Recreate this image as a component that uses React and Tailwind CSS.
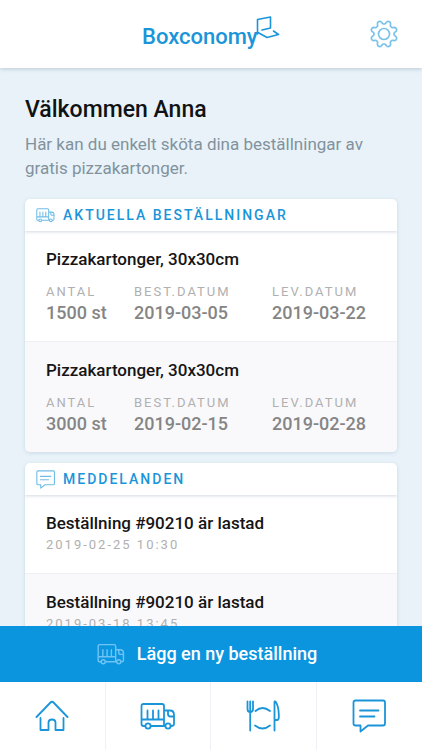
import React from "react";

function Logo() {
  return (
    <svg viewBox="0 0 140 36" className="h-9 w-[140px]" fill="none" role="img" aria-label="Boxconomy">
      <text x="1" y="28" fill="#1b95d9" fontSize="22" fontWeight="500" className="font-['Roboto',sans-serif]">
        Boxconomy
      </text>
      <path
        d="M116.500 18V3.500L129.500 1V12L121 14M117 16.500L126 21.500L137.500 18.500L132.500 15"
        stroke="#1b95d9"
        strokeWidth="1.600"
        strokeLinecap="round"
        strokeLinejoin="round"
      />
    </svg>
  );
}

// Eight rounded teeth traced as a wave around the hub.
const gearPath =
  Array.from({ length: 144 }, (_, i) => {
    const angle = (i / 144) * Math.PI * 2;
    const wave = Math.tanh(-1.5 * Math.cos(8 * angle)) / Math.tanh(1.5);
    const r = 11.7 + 1.7 * wave;
    return `${i ? "L" : "M"}${(14 + r * Math.cos(angle)).toFixed(2)} ${(14 + r * Math.sin(angle)).toFixed(2)}`;
  }).join("") + "Z";

function GearIcon({ className }) {
  return (
    <svg viewBox="0 0 28 28" className={className} fill="none" stroke="currentColor" strokeWidth="1.700" strokeLinejoin="round" aria-hidden="true">
      <circle cx="14" cy="14" r="5.500" />
      <path d={gearPath} />
    </svg>
  );
}

function TruckIcon({ className, strokeWidth = 1.8 }) {
  return (
    <svg viewBox="0 0 36 28" className={className} fill="none" stroke="currentColor" strokeWidth={strokeWidth} strokeLinecap="round" strokeLinejoin="round" aria-hidden="true">
      <path d="M5 24H3.500Q1.500 24 1.500 22V4Q1.500 2 3.500 2H22Q24 2 24 4V24M1.500 17.500H24M11 24H25M24 8.500H30Q34 8.500 34 13V22Q34 24 31 24" />
      <path d="M7.500 8.500V17M13 8.500V17M18.500 8.500V17M28 9V12Q28 14.500 30.500 14.500H34" />
      <circle cx="8" cy="24" r="2.600" />
      <circle cx="28" cy="24" r="2.600" />
    </svg>
  );
}

function MessageIcon({ className, strokeWidth = 1.8 }) {
  return (
    <svg viewBox="0 0 34 34" className={className} fill="none" stroke="currentColor" strokeWidth={strokeWidth} strokeLinecap="round" strokeLinejoin="round" aria-hidden="true">
      <path d="M3.500 1.500H31Q33 1.500 33 3.500V24.500Q33 26.500 31 26.500H16L8.500 32.500V26.500H3.500Q1.500 26.500 1.500 24.500V3.500Q1.500 1.500 3.500 1.500Z" />
      <path d="M8 11.500H26.500M8 17.500H22.500" />
    </svg>
  );
}

function HomeIcon({ className }) {
  return (
    <svg viewBox="0 0 34 32" className={className} fill="none" stroke="currentColor" strokeWidth="1.800" strokeLinecap="round" strokeLinejoin="round" aria-hidden="true">
      <path d="M1.500 17L15.500 2.500Q17 1 18.500 2.500L32.500 17" />
      <path d="M5.500 18V30H13.500V22.500Q13.500 19.500 17 19.500Q20.500 19.500 20.500 22.500V30H28.500V18" />
    </svg>
  );
}

function MealIcon({ className }) {
  return (
    <svg viewBox="0 0 34 32" className={className} fill="none" stroke="currentColor" strokeWidth="1.800" strokeLinecap="round" strokeLinejoin="round" aria-hidden="true">
      <path d="M1.500 1.500V9Q1.500 12 4.200 12Q7 12 7 9V1.500M4.200 1.500V30.500" />
      <path d="M9.500 11Q16.500 5 24 11M9 25.500Q16.500 31.500 24 25.500" />
      <path d="M28.500 30.500V2Q28.500 1 29.500 1.500C32.500 6 33 12 32.800 17.500Q32.700 20 31 20H28.500" />
    </svg>
  );
}

const orders = [
  { name: "Pizzakartonger, 30x30cm", amount: "1500 st", ordered: "2019-03-05", delivery: "2019-03-22" },
  { name: "Pizzakartonger, 30x30cm", amount: "3000 st", ordered: "2019-02-15", delivery: "2019-02-28" },
];

const messages = [
  { title: "Beställning #90210 är lastad", date: "2019-02-25 10:30" },
  { title: "Beställning #90210 är lastad", date: "2019-03-18 13:45" },
];

const tabs = [
  { label: "Hem", icon: <HomeIcon className="h-8 w-[34px]" /> },
  { label: "Beställningar", icon: <TruckIcon className="h-7 w-9" /> },
  { label: "Restaurang", icon: <MealIcon className="h-8 w-[34px]" /> },
  { label: "Meddelanden", icon: <MessageIcon className="size-[34px]" /> },
];

function Card({ title, icon, children }) {
  return (
    <section className="shrink-0 overflow-hidden rounded-[5px] bg-white shadow-[0_1px_4px_rgba(80,120,150,0.2)]">
      <div className="relative flex h-8 items-center gap-2 px-[11px] text-[#6fbde8] shadow-[0_1px_3px_rgba(60,80,110,0.22)]">
        {icon}
        <h2 className="text-[14px] leading-4 font-medium tracking-[2px] text-[#1b95d9] uppercase">{title}</h2>
      </div>
      <ul className="divide-y divide-[#eff0f5]">{children}</ul>
    </section>
  );
}

function Field({ label, value }) {
  return (
    <div>
      <dt className="text-[13px] leading-[18px] tracking-[2px] text-[#b0b0b0] uppercase">{label}</dt>
      <dd className="text-[18px] leading-6 font-medium text-[#858585]">{value}</dd>
    </div>
  );
}

export default function App() {
  return (
    <div className="flex h-screen flex-col bg-[#e9f2f9] font-['Roboto','Liberation_Sans',sans-serif]">
      <header className="relative z-10 grid h-[68px] shrink-0 grid-cols-[1fr_auto_1fr] items-center bg-white px-6 shadow-[0_1px_4px_rgba(80,110,130,0.3)]">
        <span />
        <Logo />
        <button type="button" aria-label="Inställningar" className="justify-self-end text-[#7cc3ea]">
          <GearIcon className="size-7" />
        </button>
      </header>

      <main className="flex min-h-0 flex-1 flex-col overflow-hidden px-[25px] pt-6">
        <h1 className="text-[23px] leading-9 font-medium text-[#101214]">Välkommen Anna</h1>
        <p className="mt-1 text-[17px] leading-6 text-[#81929d]">
          Här kan du enkelt sköta dina beställningar av gratis pizzakartonger.
        </p>

        <div className="mt-[19px] flex flex-col gap-[11px]">
          <Card title="Aktuella beställningar" icon={<TruckIcon className="h-4 w-[19px]" strokeWidth={2} />}>
            {orders.map((o) => (
              <li key={o.ordered} className="px-[21px] py-4 even:bg-[#f9f9fc]">
                <h3 className="text-[17px] leading-6 font-medium text-[#151515]">{o.name}</h3>
                <dl className="mt-3 grid grid-cols-[88px_138px_1fr]">
                  <Field label="Antal" value={o.amount} />
                  <Field label="Best.datum" value={o.ordered} />
                  <Field label="Lev.datum" value={o.delivery} />
                </dl>
              </li>
            ))}
          </Card>

          <Card title="Meddelanden" icon={<MessageIcon className="size-[19px]" strokeWidth={2} />}>
            {messages.map((m) => (
              <li key={m.date} className="px-[21px] pt-4 pb-5 even:bg-[#f9f9fc]">
                <h3 className="text-[17px] leading-6 font-medium text-[#151515]">{m.title}</h3>
                <p className="mt-0.5 text-[13px] leading-4 tracking-[2px] text-[#b0b0b0]">{m.date}</p>
              </li>
            ))}
          </Card>
        </div>
      </main>

      <button type="button" className="flex h-14 w-full shrink-0 items-center justify-center gap-3 bg-[#0b95df] pr-2 text-[18px] leading-6 font-medium text-white">
        <TruckIcon className="h-[22px] w-7 text-[#6fc4f3]" />
        Lägg en ny beställning
      </button>

      <nav className="grid h-[68px] shrink-0 grid-cols-4 divide-x divide-[#eef2f6] bg-white">
        {tabs.map((t) => (
          <a key={t.label} href="#" aria-label={t.label} className="flex items-center justify-center text-[#1b95d9]">
            {t.icon}
          </a>
        ))}
      </nav>
    </div>
  );
}
